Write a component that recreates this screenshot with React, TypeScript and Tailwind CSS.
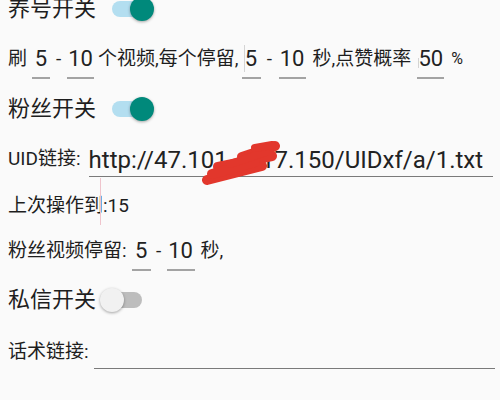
import React from "react";

function Toggle({ on }: { on: boolean }) {
  return (
    <span className="relative inline-block w-[46px] h-[26px] shrink-0">
      <span
        className={
          on
            ? "absolute left-[4px] right-[4px] top-[5px] h-[16px] rounded-full bg-[#b3def0]"
            : "absolute left-[4px] right-[4px] top-[5px] h-[16px] rounded-full bg-[#bdbdbd]"
        }
      />
      <span
        className={
          on
            ? "absolute right-0 top-[1px] w-[24px] h-[24px] rounded-full bg-[#00897b] shadow-[0_1px_3px_rgba(0,0,0,0.35)]"
            : "absolute left-0 top-[1px] w-[24px] h-[24px] rounded-full bg-[#f1f1f1] shadow-[0_1px_3px_rgba(0,0,0,0.35)]"
        }
      />
    </span>
  );
}

function Num({ v, w }: { v: string; w: string }) {
  return (
    <span
      className={
        "inline-flex justify-center text-[22px] leading-[26px] pt-[7px] pb-[5px] border-b-2 border-[#a3a3a3] text-[#222] " +
        w
      }
    >
      {v}
    </span>
  );
}

export default function App() {
  return (
    <div className="relative w-[500px] h-[400px] overflow-hidden bg-[#fafafa] text-[#1e1e1e] font-['Roboto','Noto_Sans_CJK_SC',sans-serif]">
      <div className="flex flex-col pl-[8px] -mt-[16px]">
        <div className="h-[50.5px] flex items-center">
          <span className="text-[22px] leading-[28px]">养号开关</span>
          <span className="ml-[12px] flex">
            <Toggle on={true} />
          </span>
        </div>

        <div className="h-[49px] flex items-center text-[19px] leading-[24px] whitespace-nowrap">
          <span>刷</span>
          <span className="ml-[5px] flex">
            <Num v="5" w="w-[18px]" />
          </span>
          <span className="w-[17px] text-center">-</span>
          <Num v="10" w="w-[27px]" />
          <span className="ml-[4px]">个视频,每个停留,</span>
          <span className="ml-[3px] flex">
            <Num v="5" w="w-[19px]" />
          </span>
          <span className="w-[18px] text-center">-</span>
          <Num v="10" w="w-[27px]" />
          <span className="ml-[7px]">秒,点赞概率</span>
          <span className="ml-[6px] flex">
            <Num v="50" w="w-[27px]" />
          </span>
          <span className="ml-[7px] text-[16px]">%</span>
        </div>

        <div className="h-[51px] flex items-center">
          <span className="text-[22px] leading-[28px]">粉丝开关</span>
          <span className="ml-[12px] flex">
            <Toggle on={true} />
          </span>
        </div>

        <div className="h-[49px] flex items-center">
          <span className="text-[19px] leading-[24px] whitespace-nowrap">UID链接:</span>
          <div className="flex-1 ml-[8px] mr-[7px] pt-[4px] pb-[2px] border-b-[1.5px] border-[#7a7a7a] text-[24px] leading-[28px] whitespace-pre overflow-hidden text-[#222]">
            {"http://47.101.\u2007\u200717.150/UIDxf/a/1.txt"}
          </div>
        </div>

        <div className="h-[44px] flex items-center">
          <span className="text-[19px] leading-[24px]">上次操作到:15</span>
        </div>

        <div className="h-[46.5px] flex items-center text-[19px] leading-[24px] whitespace-nowrap">
          <span>粉丝视频停留:</span>
          <span className="ml-[5px] flex">
            <Num v="5" w="w-[19px]" />
          </span>
          <span className="w-[16px] text-center">-</span>
          <Num v="10" w="w-[28px]" />
          <span className="ml-[6px]">秒,</span>
        </div>

        <div className="h-[51px] flex items-center">
          <span className="text-[22px] leading-[28px]">私信开关</span>
          <span className="ml-[4px] flex">
            <Toggle on={false} />
          </span>
        </div>

        <div className="h-[54px] flex items-center">
          <span className="text-[19px] leading-[24px] whitespace-nowrap">话术链接:</span>
          <div className="flex-1 ml-[5px] mr-[5px] h-[34px] border-b-[1.5px] border-[#7a7a7a]" />
        </div>
      </div>

      {/* text cursors / artifacts */}
      <div className="absolute left-[244px] top-[45px] w-px h-[27px] bg-[#d4d4d4]" />
      <div className="absolute left-[418px] top-[58px] w-px h-[10px] bg-[#d4d4d4]" />
      <div className="absolute left-[100px] top-[178px] w-px h-[47px] bg-[#efc4cc]" />

      {/* red redaction scribble */}
      <svg
        className="absolute left-[200px] top-[140px]"
        width="95"
        height="46"
        viewBox="0 0 95 46"
      >
        <g stroke="#e2372c" strokeLinecap="round" strokeLinejoin="round" fill="none">
          <path d="M7 40 L62 26 L18 27 L72 16 L42 17 L75 6" strokeWidth="10" />
          <path d="M12 34 L55 22" strokeWidth="10" />
          <path d="M30 24 L66 12" strokeWidth="8" />
          <path d="M55 8 L72 5" strokeWidth="8" />
        </g>
      </svg>
    </div>
  );
}
